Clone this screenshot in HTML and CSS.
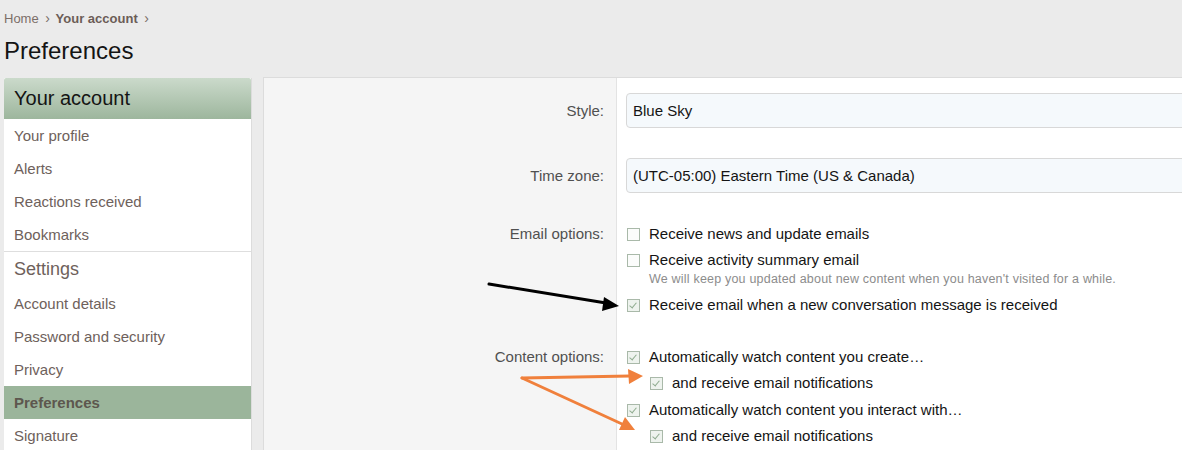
FILE: index.html
```html
<!DOCTYPE html>
<html>
<head>
    <title>Preferences</title>
    <link rel="stylesheet" href="styles.css">
</head>
<body>
<div class="page">
    <div class="crumbs">
        <a href="#">Home</a>
        <span class="sep">&rsaquo;</span>
        <a href="#" class="strong">Your account</a>
        <span class="sep">&rsaquo;</span>
    </div>
    <h1 class="title">Preferences</h1>

    <div class="layout">
        <div class="sidebar">
            <div class="side-head">Your account</div>
            <a class="side-item" href="#">Your profile</a>
            <a class="side-item" href="#">Alerts</a>
            <a class="side-item" href="#">Reactions received</a>
            <a class="side-item" href="#">Bookmarks</a>
            <div class="side-group">Settings</div>
            <a class="side-item" href="#">Account details</a>
            <a class="side-item" href="#">Password and security</a>
            <a class="side-item" href="#">Privacy</a>
            <a class="side-item active" href="#">Preferences</a>
            <a class="side-item" href="#">Signature</a>
        </div>

        <div class="main">
            <div class="row">
                <div class="label tall">Style:</div>
                <div class="field"><div class="input">Blue Sky</div></div>
            </div>
            <div class="row">
                <div class="label tall">Time zone:</div>
                <div class="field"><div class="input">(UTC-05:00) Eastern Time (US &amp; Canada)</div></div>
            </div>
            <div class="row">
                <div class="label">Email options:</div>
                <div class="field options">
                    <div class="opt"><span class="box"></span>Receive news and update emails</div>
                    <div class="opt">
                        <span class="box"></span>Receive activity summary email
                        <div class="hint">We will keep you updated about new content when you haven't visited for a while.</div>
                    </div>
                    <div class="opt"><span class="box on"></span>Receive email when a new conversation message is received</div>
                </div>
            </div>
            <div class="row">
                <div class="label">Content options:</div>
                <div class="field options">
                    <div class="opt"><span class="box on"></span>Automatically watch content you create&hellip;</div>
                    <div class="opt sub"><span class="box on"></span>and receive email notifications</div>
                    <div class="opt"><span class="box on"></span>Automatically watch content you interact with&hellip;</div>
                    <div class="opt sub"><span class="box on"></span>and receive email notifications</div>
                </div>
            </div>
        </div>
    </div>

    <!-- annotation arrows drawn over the screenshot -->
    <svg class="marks" width="1182" height="450" viewBox="0 0 1182 450">
        <g stroke="#000" stroke-width="3" fill="none" stroke-linecap="round">
            <line x1="489" y1="284" x2="606" y2="303"/>
        </g>
        <polygon points="619,306 604,297 602,311" fill="#000"/>
        <g stroke="#f0803c" stroke-width="3" fill="none" stroke-linecap="round">
            <line x1="522" y1="378" x2="630" y2="376"/>
            <line x1="522" y1="378" x2="622" y2="424"/>
        </g>
        <polygon points="643,376 628,369 629,384" fill="#f0803c"/>
        <polygon points="635,430 625,417 619,430" fill="#f0803c"/>
    </svg>
</div>
</body>
</html>
```

FILE: styles.css
```css
body {
    font-family: "Liberation Sans", Arial, sans-serif;
    background-color: #ebebeb;
    margin: 0;
    overflow: hidden;
}

a {
    text-decoration: none;
}

.page {
    position: relative;
    width: 1182px;
    height: 450px;
    padding-left: 4px;
    box-sizing: border-box;
}

.crumbs {
    font-size: 13px;
    line-height: 16px;
    padding-top: 10px;
    color: #7b6e68;
}

.crumbs a {
    color: #7b6e68;
}

.crumbs .strong {
    font-weight: bold;
    color: #6b5d57;
}

.crumbs .sep {
    margin: 0 2px 0 3px;
    font-size: 14px;
}

.title {
    margin: 0;
    padding-top: 10px;
    font-size: 24px;
    line-height: 28px;
    font-weight: normal;
    color: #141414;
}

.layout {
    display: flex;
    gap: 11px;
    margin-top: 12px;
    width: 1260px;
}

.sidebar {
    width: 248px;
    flex: none;
    margin-top: 1px;
    background-color: #fff;
    border-right: 1px solid #dcdcdc;
    box-sizing: border-box;
    height: 380px;
}

.side-head {
    height: 41px;
    line-height: 40px;
    padding-left: 10px;
    font-size: 20px;
    color: #141414;
    background: linear-gradient(to bottom, #cbdacb, #9db69d);
    border-radius: 2px 2px 0 0;
}

.side-item {
    display: block;
    height: 33px;
    line-height: 33px;
    padding-left: 10px;
    font-size: 15px;
    color: #6e615b;
}

.side-item.active {
    background-color: #9bb59b;
    font-weight: bold;
    color: #5d574e;
}

.side-group {
    height: 35px;
    line-height: 35px;
    padding-left: 10px;
    font-size: 18px;
    color: #6e615b;
    border-top: 1px solid #dedede;
}

.main {
    flex: 1;
    background-color: #fff;
    border: 1px solid #dcdcdc;
    border-right: none;
    height: 380px;
}

.row {
    display: flex;
}

.label {
    width: 340px;
    flex: none;
    padding: 15px 12px 15px 0;
    background-color: #f5f5f5;
    border-right: 1px solid #e3e3e3;
    text-align: right;
    font-size: 15px;
    line-height: 22px;
    color: #505050;
}

.label.tall {
    line-height: 35px;
}

.field {
    flex: 1;
    padding: 15px 0 15px 9px;
}

.input {
    height: 35px;
    line-height: 33px;
    box-sizing: border-box;
    padding-left: 6px;
    font-size: 15px;
    color: #141414;
    background-color: #f5f9fc;
    border: 1px solid #d8d8d8;
    border-radius: 4px;
}

.options {
    display: flex;
    flex-direction: column;
    gap: 4px;
    padding-left: 10px;
}

.opt {
    position: relative;
    padding-left: 22px;
    font-size: 15px;
    line-height: 22px;
    color: #141414;
}

.opt.sub {
    margin-left: 23px;
    margin-bottom: 1px;
}

.box {
    position: absolute;
    left: 0;
    top: 5px;
    width: 11px;
    height: 11px;
    border: 1px solid #a9b9a9;
    background-color: #fbfcfb;
}

.box.on {
    background-color: #eef3ee;
}

.box.on::after {
    content: "";
    position: absolute;
    left: 3px;
    top: 1px;
    width: 3px;
    height: 6px;
    border: solid #8fac8f;
    border-width: 0 1.5px 1.5px 0;
    transform: rotate(40deg);
}

.hint {
    font-size: 12.5px;
    letter-spacing: 0.2px;
    line-height: 16px;
    color: #8c8c8c;
    margin-bottom: 3px;
}

.marks {
    position: absolute;
    left: 0;
    top: 0;
    pointer-events: none;
}
```
